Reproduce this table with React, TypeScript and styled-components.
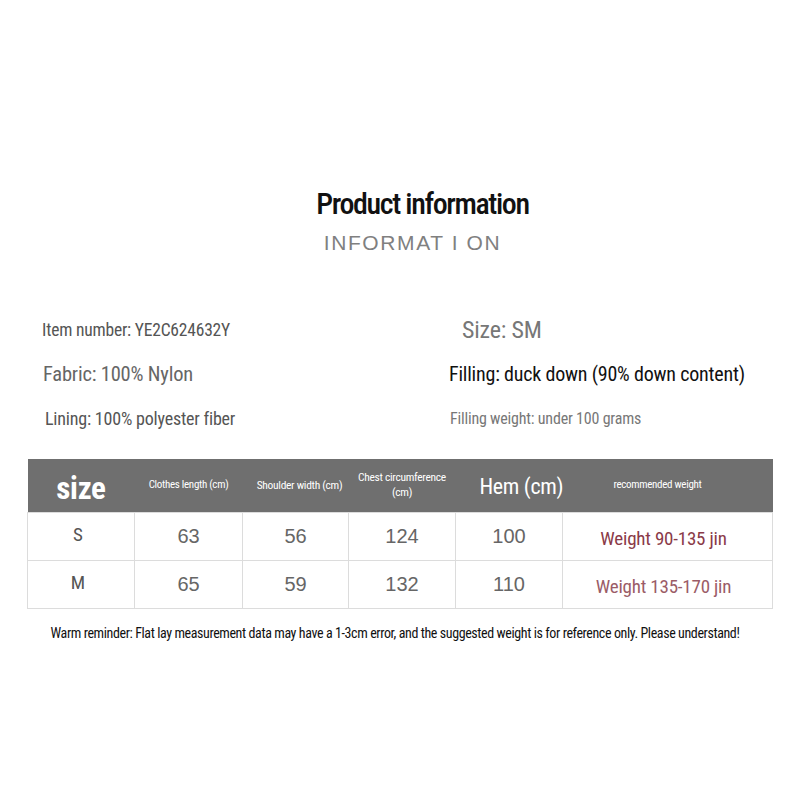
import React from 'react';
import styled, { createGlobalStyle } from 'styled-components';

const condensed = `'Roboto Condensed', 'Liberation Sans Narrow', 'DejaVu Sans Condensed', 'Liberation Sans', sans-serif`;

const GlobalStyle = createGlobalStyle`
  html, body {
    margin: 0;
    padding: 0;
    background: #ffffff;
  }
  body {
    font-family: ${condensed};
  }
`;

const leftInfo = [
  { text: 'Item number: YE2C624632Y', size: 17.5, color: '#555555', indent: 0 },
  { text: 'Fabric: 100% Nylon', size: 20.5, color: '#666666', indent: 1 },
  { text: 'Lining: 100% polyester fiber', size: 18, color: '#555555', indent: 3 }
];

const rightInfo = [
  { text: 'Size: SM', size: 24, color: '#777777', indent: 13 },
  { text: 'Filling: duck down (90% down content)', size: 20, color: '#111111', indent: 0 },
  { text: 'Filling weight: under 100 grams', size: 16, color: '#777777', indent: 1 }
];

const rows = [
  { size: 'S', length: 63, shoulder: 56, chest: 124, hem: 100, weight: 'Weight 90-135 jin', tone: '#8a3a48' },
  { size: 'M', length: 65, shoulder: 59, chest: 132, hem: 110, weight: 'Weight 135-170 jin', tone: '#9b5c67' }
];

const App = () => {
  return (
    <Page>
      <GlobalStyle />
      <Heading>
        <Title>Product information</Title>
        <Subtitle>INFORMAT I ON</Subtitle>
      </Heading>

      <InfoGrid>
        <InfoColumn>
          {leftInfo.map((item) => (
            <InfoLine key={item.text} size={item.size} color={item.color} indent={item.indent}>
              {item.text}
            </InfoLine>
          ))}
        </InfoColumn>
        <InfoColumn>
          {rightInfo.map((item) => (
            <InfoLine key={item.text} size={item.size} color={item.color} indent={item.indent}>
              {item.text}
            </InfoLine>
          ))}
        </InfoColumn>
      </InfoGrid>

      <SizeTable>
        <colgroup>
          <col style={{ width: 107 }} />
          <col style={{ width: 108 }} />
          <col style={{ width: 106 }} />
          <col style={{ width: 107 }} />
          <col style={{ width: 107 }} />
          <col style={{ width: 210 }} />
        </colgroup>
        <thead>
          <tr>
            <HeadCell size={31} bold padTop={8}>
              size
            </HeadCell>
            <HeadCell size={11}>Clothes length (cm)</HeadCell>
            <HeadCell size={11.5} padLeft={8}>
              Shoulder width (cm)
            </HeadCell>
            <HeadCell size={11.5}>
              Chest circumference
              <br />
              (cm)
            </HeadCell>
            <HeadCell size={22} padLeft={24} padTop={4}>
              Hem (cm)
            </HeadCell>
            <HeadCell size={11} padRight={20}>
              recommended weight
            </HeadCell>
          </tr>
        </thead>
        <tbody>
          {rows.map((row) => (
            <BodyRow key={row.size}>
              <SizeCell>{row.size}</SizeCell>
              <NumberCell>{row.length}</NumberCell>
              <NumberCell>{row.shoulder}</NumberCell>
              <NumberCell>{row.chest}</NumberCell>
              <NumberCell>{row.hem}</NumberCell>
              <WeightCell tone={row.tone}>{row.weight}</WeightCell>
            </BodyRow>
          ))}
        </tbody>
      </SizeTable>

      <Reminder>
        Warm reminder: Flat lay measurement data may have a 1-3cm error, and the suggested weight is for
        reference only. Please understand!
      </Reminder>
    </Page>
  );
};

export default App;

interface lineProps {
  size: number;
  color: string;
  indent: number;
}

interface headProps {
  size: number;
  bold?: boolean;
  padTop?: number;
  padLeft?: number;
  padRight?: number;
}

interface toneProps {
  tone: string;
}

const Page = styled.div`
  width: 800px;
  height: 800px;
  background: #ffffff;
  padding-top: 186px;
  box-sizing: border-box;
  overflow: hidden;
`;

const Heading = styled.div`
  display: flex;
  flex-direction: column;
  align-items: center;
  margin-left: 45px;
`;

const Title = styled.div`
  font-family: ${condensed};
  font-size: 30px;
  line-height: 36px;
  font-weight: 500;
  letter-spacing: -1.4px;
  color: #111111;
`;

const Subtitle = styled.div`
  margin-top: 9px;
  margin-left: -20px;
  font-family: 'Liberation Sans', Arial, sans-serif;
  font-size: 21px;
  line-height: 24px;
  letter-spacing: 1.6px;
  color: #808080;
`;

const InfoGrid = styled.div`
  display: grid;
  grid-template-columns: 407px 1fr;
  margin-top: 53px;
  padding-left: 42px;
`;

const InfoColumn = styled.div`
  display: flex;
  flex-direction: column;
`;

const InfoLine = styled.div<lineProps>`
  height: 44px;
  display: flex;
  align-items: center;
  padding-left: ${(p) => p.indent}px;
  font-family: ${condensed};
  font-size: ${(p) => p.size}px;
  letter-spacing: -0.2px;
  color: ${(p) => p.color};
  white-space: nowrap;
`;

const SizeTable = styled.table`
  margin-top: 19px;
  margin-left: 27px;
  width: 745px;
  border-collapse: collapse;
  table-layout: fixed;

  td {
    border: 1px solid #dcdcdc;
    padding: 0;
    line-height: 22px;
    text-align: center;
    vertical-align: middle;
  }
`;

const BodyRow = styled.tr`
  height: 48px;
`;

const HeadCell = styled.th<headProps>`
  background: #6f6f6f;
  height: 53px;
  padding: ${(p) => p.padTop || 0}px ${(p) => p.padRight || 0}px 0 ${(p) => p.padLeft || 0}px;
  box-sizing: border-box;
  text-align: center;
  font-family: ${condensed};
  font-size: ${(p) => p.size}px;
  font-weight: ${(p) => (p.bold ? 700 : 400)};
  letter-spacing: -0.3px;
  line-height: 1.3;
  color: #ffffff;
  white-space: nowrap;
`;

const SizeCell = styled.td`
  font-family: ${condensed};
  font-size: 19px;
  color: #555555;
  padding-right: 6px !important;
  padding-bottom: 3px !important;
`;

const NumberCell = styled.td`
  font-family: 'Liberation Sans', Arial, sans-serif;
  font-size: 20px;
  color: #666666;
  padding-bottom: 1px !important;
`;

const WeightCell = styled.td<toneProps>`
  font-family: ${condensed};
  font-size: 19px;
  letter-spacing: -0.2px;
  color: ${(p) => p.tone};
  padding: 5px 8px 0 0 !important;
`;

const Reminder = styled.div`
  margin-top: 15px;
  margin-left: -10px;
  text-align: center;
  font-family: ${condensed};
  font-size: 14px;
  line-height: 18px;
  letter-spacing: -0.4px;
  color: #111111;
  white-space: nowrap;
`;
